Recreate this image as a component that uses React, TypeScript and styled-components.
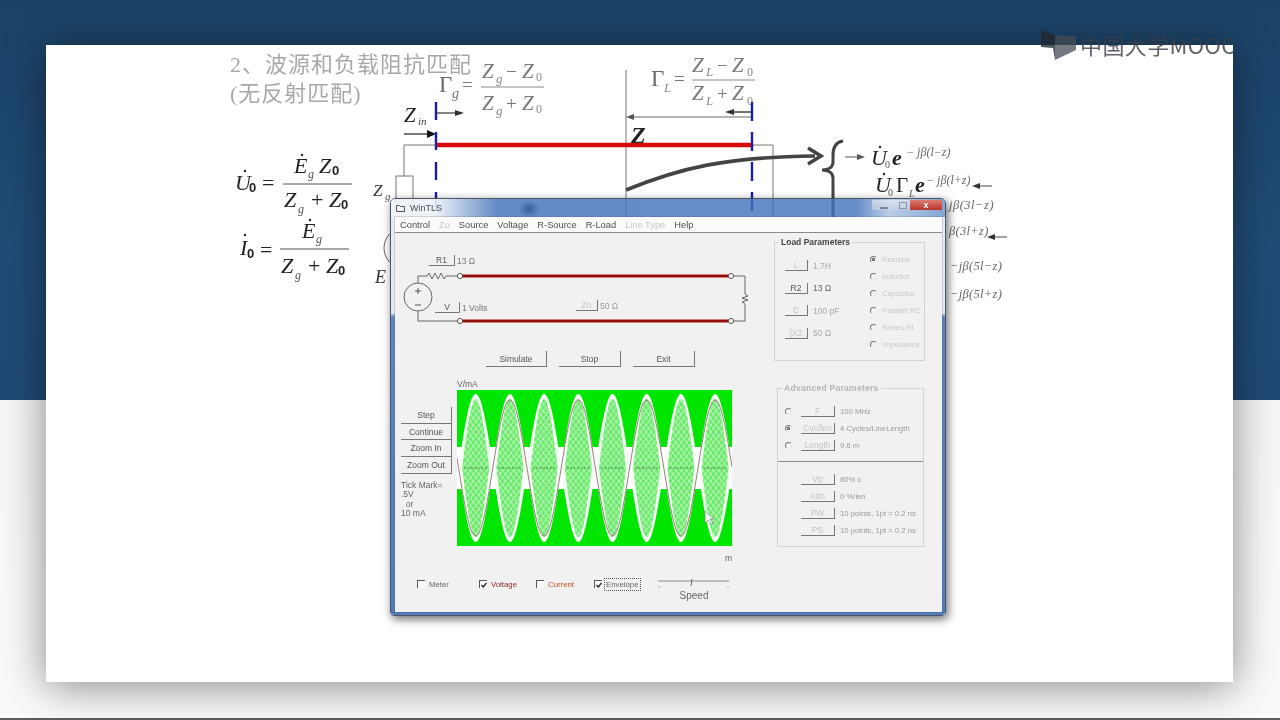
import React from "react";
import styled, { createGlobalStyle } from "styled-components";

const Global = createGlobalStyle`
  html, body { margin: 0; padding: 0; background: #fff; }
  #root { width: 1280px; height: 720px; overflow: hidden; }
`;

const Page = styled.div`
  position: relative;
  width: 1280px;
  height: 720px;
  overflow: hidden;
  display: grid;
  grid-template-rows: 400px 320px;
  filter: blur(0.5px);
  font-family: "Liberation Sans", Arial, sans-serif;
`;
const TopBand = styled.div`
  background: linear-gradient(180deg, #1b4266 0%, #204c77 60%, #1f4a76 100%);
`;
const BottomBand = styled.div`
  background: linear-gradient(180deg, #f6f6f6 0%, #fafafa 100%);
  border-bottom: 2px solid #5c5c5c;
`;
const Slide = styled.div`
  position: absolute;
  left: 46px;
  top: 45px;
  width: 1187px;
  height: 637px;
  background: #fff;
  box-shadow: 0 4px 40px rgba(0, 0, 0, 0.46);
`;
const Diagram = styled.svg`
  display: block;
`;
const Title = styled.div`
  position: absolute;
  left: 184px;
  top: 5px;
  font-family: "Liberation Serif", "Noto Sans CJK SC", serif;
  font-size: 22px;
  line-height: 29px;
  letter-spacing: 1px;
  color: #a8a8a8;
  font-weight: 400;
  white-space: nowrap;
`;
const M = styled.text<{ $s?: number; $i?: boolean; $b?: boolean; $c?: string; $sans?: boolean }>`
  font-family: ${(p) => (p.$sans ? '"Liberation Sans", Arial, sans-serif' : '"Liberation Serif", "Times New Roman", serif')};
  font-size: ${(p) => p.$s ?? 22}px;
  font-style: ${(p) => (p.$i ? "italic" : "normal")};
  font-weight: ${(p) => (p.$b ? 700 : 400)};
  fill: ${(p) => p.$c ?? "#222"};
`;

const Logo = styled.div`
  position: absolute;
  left: 1040px;
  top: 29px;
  display: flex;
  align-items: flex-start;
  gap: 3px;
  color: rgba(58, 62, 72, 0.82);
  font-family: "Noto Sans CJK SC", "Noto Sans", sans-serif;
  font-size: 22px;
  line-height: 30px;
  letter-spacing: 0.4px;
  white-space: nowrap;
`;

const Win = styled.div`
  position: absolute;
  left: 390px;
  top: 198px;
  width: 556px;
  height: 418px;
  box-sizing: border-box;
  border: 1px solid #4b5663;
  border-radius: 5px 5px 4px 4px;
  box-shadow: 2px 3px 10px rgba(0, 0, 0, 0.6);
  display: flex;
  flex-direction: column;
  overflow: hidden;
`;
const TitleBar = styled.div`
  height: 18px;
  flex: none;
  display: flex;
  align-items: center;
  padding: 0 3px 0 5px;
  gap: 5px;
  background:
    radial-gradient(ellipse 11px 9px at 138px 10px, rgba(40, 80, 140, 0.75), rgba(40, 80, 140, 0) 100%),
    linear-gradient(90deg, rgba(238, 242, 247, 0.92) 0%, rgba(236, 241, 247, 0.9) 8%, rgba(66, 114, 186, 0.82) 19%, rgba(66, 114, 186, 0.8) 84%, rgba(170, 192, 222, 0.78) 90%, rgba(110, 150, 205, 0.85) 100%);
`;
const TitleText = styled.span`
  font-size: 9px;
  color: #474c55;
`;
const Caption = styled.div`
  margin-left: auto;
  display: flex;
  align-items: flex-start;
  align-self: flex-start;
  padding-top: 1px;
`;
const CaptionGlass = styled.div<{ $w: number }>`
  width: ${(p) => p.$w}px;
  height: 10px;
  background: linear-gradient(180deg, rgba(240, 244, 248, 0.55), rgba(200, 210, 225, 0.6));
  display: flex;
  align-items: center;
  justify-content: center;
`;
const MaxGlyph = styled.span`
  width: 6px;
  height: 5px;
  border: 1px solid #8a94a2;
`;
const MinGlyph = styled.span`
  width: 8px;
  height: 2px;
  margin-top: 5px;
  background: #7d8794;
`;
const Close = styled.div`
  width: 32px;
  height: 10px;
  background: linear-gradient(180deg, #dc7a72, #b9332c);
  color: #fff;
  font-size: 9px;
  font-weight: 700;
  line-height: 10px;
  text-align: center;
`;
const Frame = styled.div`
  flex: 1;
  min-height: 0;
  box-sizing: border-box;
  padding: 0 3px 3px 4px;
  background: linear-gradient(180deg, #e9edf2 0px, #e4e9ef 96px, #5d84be 100px, #527cba 100%);
  display: flex;
  flex-direction: column;
`;
const Client = styled.div`
  flex: 1;
  min-height: 0;
  background: #f1f1f1;
  display: flex;
  flex-direction: column;
  box-shadow: 0 0 0 1px rgba(60, 80, 110, 0.2);
`;
const MenuBar = styled.div`
  height: 15px;
  flex: none;
  background: #fbfbfb;
  border-bottom: 1px solid #8b8b8b;
  display: flex;
  align-items: center;
  padding-left: 5px;
  gap: 9px;
`;
const MenuItem = styled.span<{ $off?: boolean }>`
  font-size: 9.3px;
  color: ${(p) => (p.$off ? "#c6c6c6" : "#4d4d4d")};
`;
const Body = styled.div`
  flex: 1;
  min-height: 0;
  display: grid;
  grid-template-columns: 375px 172px;
`;
const LeftCol = styled.div`
  display: flex;
  flex-direction: column;
`;
const Schematic = styled.div`
  position: relative;
  height: 112px;
  flex: none;
`;
const Flat = styled.div<{ $w: number; $h?: number; $off?: boolean }>`
  box-sizing: border-box;
  width: ${(p) => p.$w}px;
  height: ${(p) => p.$h ?? 11}px;
  flex: none;
  border-right: 1px solid #777;
  border-bottom: 1px solid #777;
  display: flex;
  align-items: center;
  justify-content: center;
  font-size: 8.5px;
  color: ${(p) => (p.$off ? "#c4c4c4" : "#555")};
`;
const OverButton = styled.div<{ $x: number; $y: number }>`
  position: absolute;
  left: ${(p) => p.$x}px;
  top: ${(p) => p.$y}px;
  display: flex;
  align-items: center;
  gap: 2px;
`;
const Value = styled.span<{ $tone?: string; $s?: number }>`
  font-size: ${(p) => p.$s ?? 8.5}px;
  color: ${(p) => p.$tone ?? "#777"};
  white-space: nowrap;
`;
const ActionRow = styled.div`
  flex: none;
  display: flex;
  gap: 12px;
  padding: 6px 0 0 91px;
`;
const PlotSection = styled.div`
  flex: none;
  display: grid;
  grid-template-columns: 62px 275px;
  margin-top: 11px;
`;
const SideCol = styled.div`
  padding: 29px 0 0 6px;
`;
const SideButton = styled(Flat)`
  color: #555;
`;
const TickNote = styled.div`
  margin-top: 7px;
  font-size: 8.5px;
  line-height: 9.3px;
  color: #666;
  white-space: pre;
`;
const PlotCol = styled.div`
  display: flex;
  flex-direction: column;
`;
const AxisLabel = styled.div<{ $end?: boolean }>`
  height: ${(p) => (p.$end ? 17 : 12)}px;
  line-height: ${(p) => (p.$end ? 25 : 13)}px;
  font-size: 8.5px;
  color: #666;
  text-align: ${(p) => (p.$end ? "right" : "left")};
  ${(p) => (p.$end ? "margin-right: 0;" : "")}
`;
const PlotSvg = styled.svg`
  display: block;
`;
const ChecksRow = styled.div`
  display: flex;
  padding: 15px 0 0 22px;
  align-items: flex-start;
`;
const CheckItem = styled.div<{ $w: number }>`
  width: ${(p) => p.$w}px;
  flex: none;
  display: flex;
  align-items: center;
  gap: 4px;
  height: 12px;
`;
const Box = styled.span`
  box-sizing: border-box;
  width: 8px;
  height: 8px;
  flex: none;
  background: #fafafa;
  border-top: 1px solid #555;
  border-left: 1px solid #555;
  display: flex;
  align-items: center;
  justify-content: center;
`;
const CheckLabel = styled.span<{ $tone?: string; $focus?: boolean }>`
  font-size: 7.8px;
  color: ${(p) => p.$tone ?? "#666"};
  ${(p) => (p.$focus ? "outline: 1px dotted #555; outline-offset: 1px;" : "")}
`;
const SpeedBox = styled.div`
  width: 72px;
  flex: none;
  display: flex;
  flex-direction: column;
  align-items: center;
`;
const SpeedLabel = styled.div`
  font-size: 10px;
  line-height: 12px;
  color: #666;
  margin-top: 1px;
`;
const RightCol = styled.div`
  display: flex;
  flex-direction: column;
`;
const Group = styled.div<{ $left: number; $top: number; $w: number; $h: number }>`
  position: relative;
  box-sizing: border-box;
  margin: ${(p) => `${p.$top}px 0 0 ${p.$left}px`};
  width: ${(p) => p.$w}px;
  height: ${(p) => p.$h}px;
  border: 1px solid #d2d2d2;
`;
const Legend = styled.div<{ $off?: boolean }>`
  position: absolute;
  left: 4px;
  top: -6px;
  padding: 0 2px;
  background: #f1f1f1;
  font-size: 8.5px;
  line-height: 10px;
  font-weight: 700;
  color: ${(p) => (p.$off ? "#b4b4b4" : "#444")};
  letter-spacing: ${(p) => (p.$off ? 0.28 : 0)}px;
  white-space: nowrap;
`;
const LoadInner = styled.div`
  display: flex;
  padding-left: 10px;
`;
const ParamCol = styled.div`
  width: 85px;
  flex: none;
  display: flex;
  flex-direction: column;
  gap: 11.5px;
  padding-top: 17px;
`;
const ParamRow = styled.div`
  display: flex;
  align-items: center;
  gap: 5px;
  height: 11px;
`;
const RadioCol = styled.div`
  padding-top: 8px;
  display: flex;
  flex-direction: column;
`;
const RadioRow = styled.div`
  height: 17px;
  display: flex;
  align-items: center;
  gap: 5px;
`;
const Radio = styled.span<{ $on?: boolean }>`
  box-sizing: border-box;
  width: 7px;
  height: 7px;
  flex: none;
  border-radius: 50%;
  border: 1px solid #e8e8e8;
  border-top-color: #777;
  border-left-color: #777;
  background: ${(p) => (p.$on ? "radial-gradient(circle, #777 0 1.5px, #f4f4f4 2px)" : "#f4f4f4")};
`;
const RadioText = styled.span`
  font-size: 7.7px;
  color: #c9c9c9;
  white-space: nowrap;
`;
const AdvUpper = styled.div`
  height: 73px;
  box-sizing: border-box;
  border-bottom: 1px solid #8d8d8d;
  padding: 14px 0 0 7px;
`;
const AdvLower = styled.div`
  padding: 9px 0 0 23px;
`;
const AdvRow = styled.div`
  height: 17px;
  display: flex;
  align-items: center;
  gap: 5px;
`;
const AdvRadioRow = styled(AdvRow)`
  gap: 0;
`;
const AdvButtonSlot = styled.div`
  margin-left: 9px;
  display: flex;
  align-items: center;
  gap: 5px;
`;

const Line = styled.line<{ $c?: string; $w?: number }>`
  stroke: ${(p) => p.$c ?? "#777"};
  stroke-width: ${(p) => p.$w ?? 1};
`;
const Trace = styled.path<{ $c?: string; $w?: number }>`
  fill: none;
  stroke: ${(p) => p.$c ?? "#777"};
  stroke-width: ${(p) => p.$w ?? 1};
`;
const Head = styled.polygon<{ $c?: string }>`
  fill: ${(p) => p.$c ?? "#444"};
`;
const Rail = styled.line`
  stroke: #8e0f0f;
  stroke-width: 2.4;
`;
const RailHalo = styled.line`
  stroke: #f0a8a0;
  stroke-width: 4;
`;
const Terminal = styled.circle`
  fill: #fff;
  stroke: #555;
  stroke-width: 1;
`;

const PERIOD = 34.2;
const LOBES = Array.from({ length: 8 }, (_, i) => 18.7 + PERIOD * i);

function lobePath(c: number, half: number, amp: number) {
  const top: string[] = [];
  const bot: string[] = [];
  for (let i = 0; i <= 24; i++) {
    const x = c - half + (2 * half * i) / 24;
    const d = Math.cos((Math.PI * (x - c)) / (2 * half)) * amp;
    top.push(`${x.toFixed(1)} ${(78 - d).toFixed(1)}`);
    bot.unshift(`${x.toFixed(1)} ${(78 + d).toFixed(1)}`);
  }
  return `M${top.join("L")}L${bot.join("L")}Z`;
}
function sinePath() {
  const pts: string[] = [];
  for (let x = 0; x <= 275; x += 1) {
    const y = 78 - 68 * Math.cos((Math.PI * (x - 52.9)) / PERIOD);
    pts.push(`${x} ${y.toFixed(1)}`);
  }
  return `M${pts.join("L")}`;
}

const Dot = ({ x, y }: { x: number; y: number }) => <circle cx={x} cy={y} r={1.2} fill="#222" />;

const SlideDiagram = () => (
  <Diagram width={1187} height={637} viewBox="46 45 1187 637">
    {/* Gamma g */}
    <M x={439} y={92} $s={23} $c="#6a6a6a">Γ</M>
    <M x={452} y={98} $s={14} $i $c="#777">g</M>
    <M x={462} y={91} $s={19} $c="#777">=</M>
    <M x={482} y={78} $s={21} $i $c="#777">Z</M>
    <M x={496} y={83} $s={13} $i $c="#888">g</M>
    <M x={506} y={78} $s={19} $c="#777">−</M>
    <M x={522} y={78} $s={21} $i $c="#777">Z</M>
    <M x={536} y={81} $s={12} $c="#888">0</M>
    <Line x1={481} y1={87} x2={544} y2={87} $c="#888" />
    <M x={482} y={110} $s={21} $i $c="#777">Z</M>
    <M x={496} y={115} $s={13} $i $c="#888">g</M>
    <M x={506} y={110} $s={19} $c="#777">+</M>
    <M x={522} y={110} $s={21} $i $c="#777">Z</M>
    <M x={536} y={113} $s={12} $c="#888">0</M>

    {/* Gamma L */}
    <M x={651} y={86} $s={23} $c="#6a6a6a">Γ</M>
    <M x={664} y={92} $s={13} $i $c="#888">L</M>
    <M x={674} y={85} $s={19} $c="#777">=</M>
    <M x={692} y={72} $s={21} $i $c="#777">Z</M>
    <M x={706} y={76} $s={13} $i $c="#888">L</M>
    <M x={717} y={72} $s={19} $c="#777">−</M>
    <M x={732} y={72} $s={21} $i $c="#777">Z</M>
    <M x={747} y={76} $s={12} $c="#888">0</M>
    <Line x1={692} y1={80} x2={755} y2={80} $c="#888" />
    <M x={692} y={100} $s={21} $i $c="#777">Z</M>
    <M x={706} y={105} $s={13} $i $c="#888">L</M>
    <M x={717} y={100} $s={19} $c="#777">+</M>
    <M x={732} y={100} $s={21} $i $c="#777">Z</M>
    <M x={747} y={105} $s={12} $c="#888">0</M>

    {/* Line, wires, dimensions */}
    <Line x1={404} y1={145} x2={436} y2={145} $c="#777" />
    <Line x1={404} y1={145} x2={404} y2={176} $c="#777" />
    <rect x={396} y={176} width={17} height={30} fill="#fff" stroke="#777" />
    <Line x1={752} y1={145} x2={773} y2={145} $c="#777" />
    <Line x1={773} y1={145} x2={773} y2={217} $c="#777" />
    <Line x1={626} y1={70} x2={626} y2={217} $c="#777" />
    <Line x1={632} y1={117} x2={752} y2={117} $c="#666" />
    <Head points="626,117 634,114 634,120" $c="#555" />
    <Line x1={436} y1={113} x2={456} y2={113} $c="#333" $w={1.2} />
    <Head points="464,113 455,110 455,116" $c="#333" />
    <Line x1={404} y1={134} x2={428} y2={134} $c="#222" $w={1.2} />
    <Head points="436,134 427,130 427,138" $c="#111" />
    <Line x1={732} y1={112} x2={752} y2={112} $c="#333" $w={1.4} />
    <Head points="725,112 734,109 734,115" $c="#333" />
    <Line x1={436} y1={145} x2={752} y2={145} $c="#d90a0a" $w={4.4} />
    <Line x1={436} y1={102} x2={436} y2={240} $c="#1b1ba6" $w={2.4} strokeDasharray="18 12" />
    <Line x1={752} y1={102} x2={752} y2={240} $c="#1b1ba6" $w={2.4} strokeDasharray="19 11" />

    <M x={404} y={122} $s={21} $i $c="#222">Z</M>
    <M x={418} y={125} $s={11} $i $c="#444">in</M>
    <M x={631} y={143} $s={24} $i $b $c="#222">Z</M>
    <M x={373} y={196} $s={17} $i $c="#333">Z</M>
    <M x={385} y={200} $s={11} $i $c="#555">g</M>
    <M x={375} y={283} $s={18} $i $c="#333">E</M>
    <circle cx={404} cy={248} r={20} fill="none" stroke="#666" />

    {/* Forward/backward */}
    <Trace d="M626 190 C680 168 725 157 815 156" $c="#444" $w={3.6} />
    <Trace d="M808 148 L821 156 L808 164" $c="#444" $w={3.6} />
    <Trace d="M843 141 C836 142 833 147 833 155 L833 162 C833 167 829 170 822 170 C829 170 833 173 833 178 L833 217" $c="#444" $w={3} />
    <Line x1={845} y1={157} x2={858} y2={157} $c="#555" />
    <Head points="865,157 857,154 857,160" $c="#555" />

    <M x={871} y={165} $s={22} $i $c="#222">U</M>
    <Dot x={880} y={147} />
    <M x={885} y={168} $s={10} $c="#555">0</M>
    <M x={892} y={165} $s={22} $i $b $c="#222">e</M>
    <M x={906} y={156} $s={12} $i $c="#666">− jβ(l−z)</M>

    <M x={875} y={192} $s={22} $i $c="#222">U</M>
    <Dot x={884} y={174} />
    <M x={888} y={196} $s={10} $c="#555">0</M>
    <M x={896} y={192} $s={21} $c="#222">Γ</M>
    <M x={909} y={197} $s={10} $i $c="#555">L</M>
    <M x={915} y={192} $s={22} $i $b $c="#222">e</M>
    <M x={926} y={184} $s={12} $i $c="#666">− jβ(l+z)</M>
    <Line x1={978} y1={186} x2={992} y2={186} $c="#444" />
    <Head points="972,186 980,183 980,189" $c="#333" />

    <M x={949} y={209} $s={12.5} $i $c="#666" letterSpacing={0.5}>jβ(3l−z)</M>
    <M x={949} y={235} $s={12.5} $i $c="#666" letterSpacing={0.3}>β(3l+z)</M>
    <Line x1={993} y1={237} x2={1007} y2={237} $c="#444" />
    <Head points="987,237 995,234 995,240" $c="#333" />
    <M x={950} y={270} $s={12.5} $i $c="#666" letterSpacing={0.3}>−jβ(5l−z)</M>
    <M x={950} y={298} $s={12.5} $i $c="#666" letterSpacing={0.3}>−jβ(5l+z)</M>

    {/* U0 */}
    <M x={235} y={190} $s={22} $i>U</M>
    <Dot x={245} y={171} />
    <M x={249} y={192} $s={13} $b $sans>0</M>
    <M x={262} y={190} $s={22}>=</M>
    <M x={294} y={173} $s={22} $i>E</M>
    <Dot x={302} y={155} />
    <M x={308} y={178} $s={12} $i $c="#555">g</M>
    <M x={319} y={173} $s={22} $i>Z</M>
    <M x={332} y={175} $s={13} $b $sans>0</M>
    <Line x1={283} y1={184} x2={352} y2={184} $c="#555" />
    <M x={284} y={207} $s={22} $i>Z</M>
    <M x={298} y={213} $s={12} $i $c="#555">g</M>
    <M x={311} y={207} $s={22}>+</M>
    <M x={329} y={207} $s={22} $i>Z</M>
    <M x={341} y={209} $s={13} $b $sans>0</M>

    {/* I0 */}
    <M x={240} y={255} $s={22} $i>I</M>
    <Dot x={245} y={235} />
    <M x={247} y={258} $s={13} $b $sans>0</M>
    <M x={260} y={257} $s={22}>=</M>
    <M x={302} y={238} $s={22} $i>E</M>
    <Dot x={310} y={220} />
    <M x={316} y={243} $s={12} $i $c="#555">g</M>
    <Line x1={280} y1={249} x2={349} y2={249} $c="#555" />
    <M x={281} y={273} $s={22} $i>Z</M>
    <M x={295} y={279} $s={12} $i $c="#555">g</M>
    <M x={308} y={273} $s={22}>+</M>
    <M x={326} y={273} $s={22} $i>Z</M>
    <M x={338} y={275} $s={13} $b $sans>0</M>
  </Diagram>
);

const SchematicArt = () => (
  <PlotSvg width={375} height={112} viewBox="395 234 375 112">
    <Trace d="M418 284 V277 H427 l2 -3 l3 6 l3 -6 l3 6 l3 -6 l3 6 l2 -3 H457" $c="#666" />
    <Trace d="M418 312 V322 H457" $c="#666" />
    <Trace d="M733 277 H745 V295 l3 2 l-6 2 l6 2 l-6 2 l3 2 V322 H733" $c="#666" />
    <circle cx={418} cy={298} r={14} fill="none" stroke="#666" />
    <Line x1={415} y1={292} x2={421} y2={292} $c="#555" />
    <Line x1={418} y1={289} x2={418} y2={295} $c="#555" />
    <Line x1={415} y1={306} x2={421} y2={306} $c="#555" />
    <RailHalo x1={460} y1={277} x2={730} y2={277} />
    <Rail x1={460} y1={277} x2={730} y2={277} />
    <RailHalo x1={460} y1={322} x2={730} y2={322} />
    <Rail x1={460} y1={322} x2={730} y2={322} />
    <Terminal cx={460} cy={277} r={2.6} />
    <Terminal cx={731} cy={277} r={2.6} />
    <Terminal cx={460} cy={322} r={2.6} />
    <Terminal cx={731} cy={322} r={2.6} />
  </PlotSvg>
);

const PlotArt = () => (
  <PlotSvg width={275} height={156} viewBox="0 0 275 156">
    <defs>
      <pattern id="lattice" width="5.4" height="7" patternUnits="userSpaceOnUse">
        <rect width="5.4" height="7" fill="#6bea6b" />
        <path d="M0 0L5.4 7M5.4 0L0 7" stroke="#d4f8d4" strokeWidth="0.8" />
      </pattern>
    </defs>
    <rect width={275} height={156} fill="#00e600" />
    <rect y={57} width={275} height={42} fill="#fff" />
    {LOBES.map((c) => (
      <path key={`o${c}`} d={lobePath(c, 17.4, 74)} fill="#f6fdf6" />
    ))}
    {LOBES.map((c) => (
      <path key={`i${c}`} d={lobePath(c, 13.5, 69)} fill="url(#lattice)" />
    ))}
    {LOBES.map((c) => (
      <Line key={`d${c}`} x1={c - 11.5} y1={78} x2={c + 11.5} y2={78} $c="#3d8a3d" strokeDasharray="2 1.4" />
    ))}
    <Trace d={sinePath()} $c="#9a6a76" $w={0.9} />
    <path d="M248 121 L248 133 L251 130 L254 134 L256 133 L253 129 L257 129 Z" fill="#f4f4f4" stroke="#777" strokeWidth="0.6" />
  </PlotSvg>
);

const CheckMark = () => (
  <svg width="6" height="6" viewBox="0 0 6 6">
    <path d="M0.5 3 L2.3 5 L5.5 0.8" fill="none" stroke="#222" strokeWidth="1.4" />
  </svg>
);

const SliderArt = () => (
  <PlotSvg width={72} height={11} viewBox="0 0 72 11">
    <Line x1={0} y1={3} x2={71} y2={3} $c="#8a8a8a" />
    <Line x1={34} y1={1} x2={33} y2={8} $c="#666" />
    <Line x1={1} y1={8} x2={1} y2={10} $c="#aaa" />
    <Line x1={70} y1={8} x2={70} y2={10} $c="#aaa" />
  </PlotSvg>
);

const LOAD_PARAMS = [
  { label: "L", value: "1.7H", off: true },
  { label: "R2", value: "13 Ω", off: false },
  { label: "C", value: "100 pF", off: true },
  { label: "|X2", value: "50 Ω", off: true },
];
const LOAD_KINDS = ["Resistor", "Inductor", "Capacitor", "Parallel RC", "Series RI", "Impedance"];
const ADV_TOP = [
  { label: "F", value: "100 MHz", on: false },
  { label: "Cyc/len", value: "4 Cycles/LineLength", on: true },
  { label: "Length", value: "9.6 m", on: false },
];
const ADV_BOTTOM = [
  { label: "Vp", value: "80% c" },
  { label: "Attn", value: "0 %/len" },
  { label: "PW", value: "10 points, 1pt = 0.2 ns" },
  { label: "PS", value: "10 points, 1pt = 0.2 ns" },
];

export default function App() {
  return (
    <Page>
      <Global />
      <TopBand />
      <BottomBand />
      <Slide>
        <SlideDiagram />
        <Title>
          2、波源和负载阻抗匹配
          <br />
          (无反射匹配)
        </Title>
      </Slide>
      <Logo>
        <svg width="37" height="32" viewBox="0 0 37 32">
          <path d="M1 1 L15 6 L15 31 L13 19 L1 18 Z" fill="rgba(35,40,50,0.8)" />
          <path d="M15 6 L36 7 L36 21 L15 31 Z" fill="rgba(70,75,85,0.75)" />
        </svg>
        <span>中国大学MOOC</span>
      </Logo>
      <Win>
        <TitleBar>
          <svg width="9" height="8" viewBox="0 0 9 8">
            <path d="M0.5 1.5 H3.5 L4.5 2.5 H8.5 V7.5 H0.5 Z" fill="#f4f4f4" stroke="#555" />
          </svg>
          <TitleText>WinTLS</TitleText>
          <Caption>
            <CaptionGlass $w={24}>
              <MinGlyph />
            </CaptionGlass>
            <CaptionGlass $w={14}>
              <MaxGlyph />
            </CaptionGlass>
            <Close>x</Close>
          </Caption>
        </TitleBar>
        <Frame>
          <Client>
            <MenuBar>
              <MenuItem>Control</MenuItem>
              <MenuItem $off>Zo</MenuItem>
              <MenuItem>Source</MenuItem>
              <MenuItem>Voltage</MenuItem>
              <MenuItem>R-Source</MenuItem>
              <MenuItem>R-Load</MenuItem>
              <MenuItem $off>Line Type</MenuItem>
              <MenuItem>Help</MenuItem>
            </MenuBar>
            <Body>
              <LeftCol>
                <Schematic>
                  <SchematicArt />
                  <OverButton $x={34} $y={22}>
                    <Flat $w={26}>R1</Flat>
                    <Value>13 Ω</Value>
                  </OverButton>
                  <OverButton $x={40} $y={69}>
                    <Flat $w={25}>V</Flat>
                    <Value>1 Volts</Value>
                  </OverButton>
                  <OverButton $x={181} $y={67}>
                    <Flat $w={22} $off>Zo</Flat>
                    <Value $tone="#999">50 Ω</Value>
                  </OverButton>
                </Schematic>
                <ActionRow>
                  <Flat $w={61} $h={16}>Simulate</Flat>
                  <Flat $w={62} $h={16}>Stop</Flat>
                  <Flat $w={62} $h={16}>Exit</Flat>
                </ActionRow>
                <PlotSection>
                  <SideCol>
                    <SideButton $w={51} $h={17}>Step</SideButton>
                    <SideButton $w={51} $h={16}>Continue</SideButton>
                    <SideButton $w={51} $h={17}>Zoom In</SideButton>
                    <SideButton $w={51} $h={17}>Zoom Out</SideButton>
                    <TickNote>{"Tick Mark=\n.5V\n  or\n10 mA"}</TickNote>
                  </SideCol>
                  <PlotCol>
                    <AxisLabel>V/mA</AxisLabel>
                    <PlotArt />
                    <AxisLabel $end>m</AxisLabel>
                  </PlotCol>
                </PlotSection>
                <ChecksRow>
                  <CheckItem $w={62}>
                    <Box />
                    <CheckLabel>Meter</CheckLabel>
                  </CheckItem>
                  <CheckItem $w={57}>
                    <Box>
                      <CheckMark />
                    </Box>
                    <CheckLabel $tone="#8e2a2a">Voltage</CheckLabel>
                  </CheckItem>
                  <CheckItem $w={58}>
                    <Box />
                    <CheckLabel $tone="#c2521f">Current</CheckLabel>
                  </CheckItem>
                  <CheckItem $w={64}>
                    <Box>
                      <CheckMark />
                    </Box>
                    <CheckLabel $focus>Envelope</CheckLabel>
                  </CheckItem>
                  <SpeedBox>
                    <SliderArt />
                    <SpeedLabel>Speed</SpeedLabel>
                  </SpeedBox>
                </ChecksRow>
              </LeftCol>
              <RightCol>
                <Group $left={4} $top={9} $w={151} $h={119}>
                  <Legend>Load Parameters</Legend>
                  <LoadInner>
                    <ParamCol>
                      {LOAD_PARAMS.map((r) => (
                        <ParamRow key={r.label}>
                          <Flat $w={23} $off={r.off}>{r.label}</Flat>
                          <Value $tone={r.off ? "#a8a8a8" : "#666"}>{r.value}</Value>
                        </ParamRow>
                      ))}
                    </ParamCol>
                    <RadioCol>
                      {LOAD_KINDS.map((k, i) => (
                        <RadioRow key={k}>
                          <Radio $on={i === 0} />
                          <RadioText>{k}</RadioText>
                        </RadioRow>
                      ))}
                    </RadioCol>
                  </LoadInner>
                </Group>
                <Group $left={7} $top={27} $w={147} $h={159}>
                  <Legend $off>Advanced Parameters</Legend>
                  <AdvUpper>
                    {ADV_TOP.map((r) => (
                      <AdvRadioRow key={r.label}>
                        <Radio $on={r.on} />
                        <AdvButtonSlot>
                          <Flat $w={34} $off>{r.label}</Flat>
                          <Value $tone="#9a9a9a" $s={7.7}>{r.value}</Value>
                        </AdvButtonSlot>
                      </AdvRadioRow>
                    ))}
                  </AdvUpper>
                  <AdvLower>
                    {ADV_BOTTOM.map((r) => (
                      <AdvRow key={r.label}>
                        <Flat $w={34} $off>{r.label}</Flat>
                        <Value $tone="#9a9a9a" $s={7.7}>{r.value}</Value>
                      </AdvRow>
                    ))}
                  </AdvLower>
                </Group>
              </RightCol>
            </Body>
          </Client>
        </Frame>
      </Win>
    </Page>
  );
}
